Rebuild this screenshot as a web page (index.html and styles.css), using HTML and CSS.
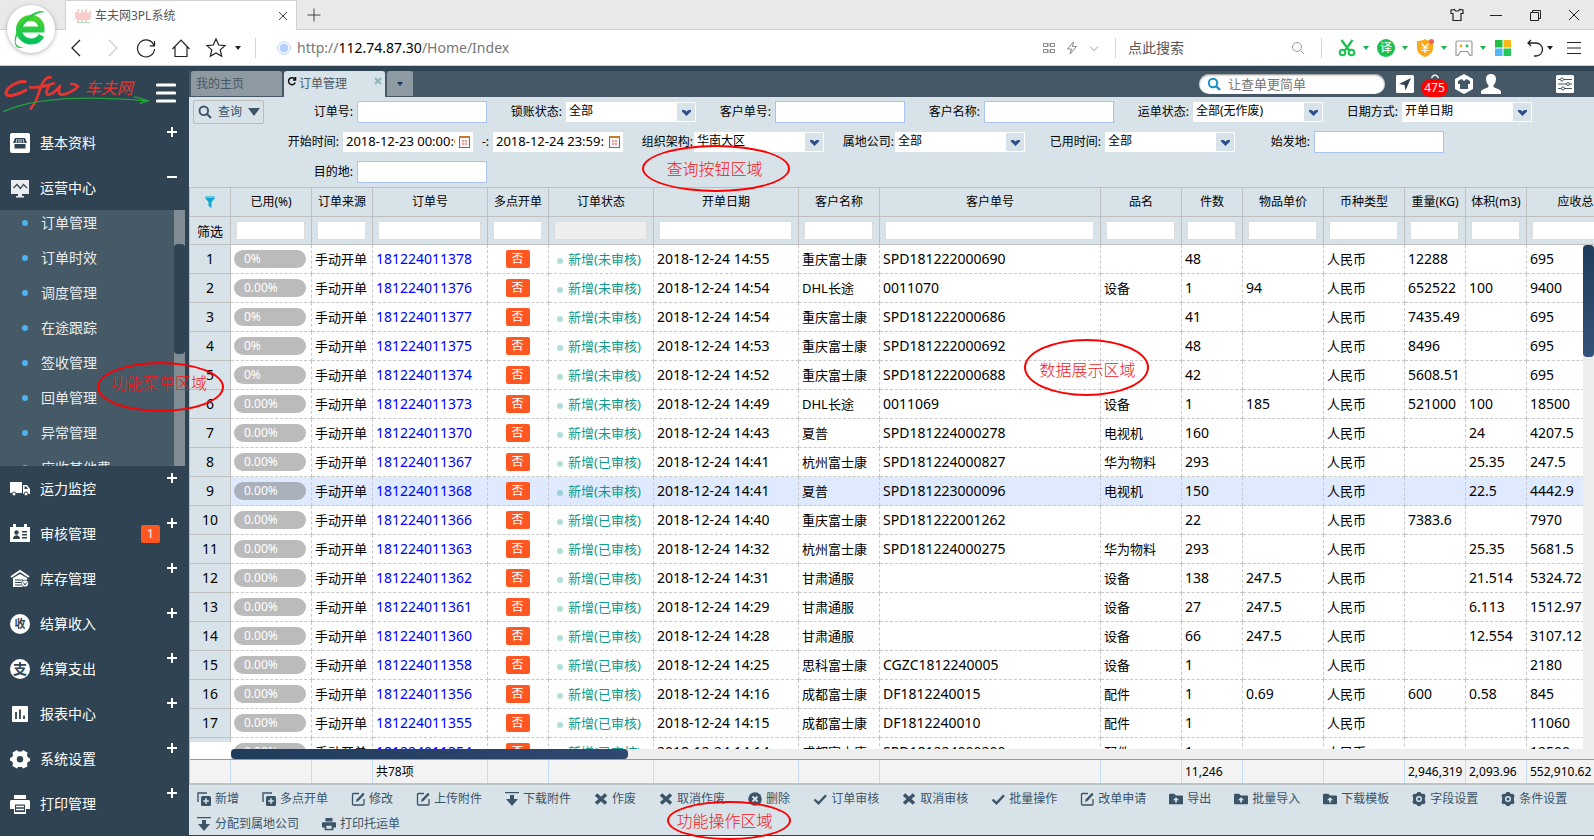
FILE: index.html
```html
<!DOCTYPE html>
<html lang="zh-CN">
<head>
<meta charset="utf-8">
<title>车夫网3PL系统</title>
<link rel="stylesheet" href="styles.css">
</head>
<body>
<svg class="defs" aria-hidden="true">
  <symbol id="i-copy" viewBox="0 0 14 14"><path d="M1 10V1h9" fill="none" stroke="currentColor" stroke-width="1.4"/><rect x="4" y="4" width="10" height="10" rx="1.5" fill="currentColor"/><path d="M9 6.2v5.6M6.2 9h5.6" stroke="#d8e3e9" stroke-width="1.6"/></symbol>
  <symbol id="i-edit" viewBox="0 0 14 14"><path d="M8 1.500H2.500a1 1 0 0 0-1 1v9.500a1 1 0 0 0 1 1H12a1 1 0 0 0 1-1V7" fill="none" stroke="currentColor" stroke-width="1.300"/><path d="M5 10l.6-2.600L12 .8l1.600 1.600L7.400 9z" fill="currentColor"/></symbol>
  <symbol id="i-down" viewBox="0 0 14 14"><path d="M0 0h14v1.300H0zM5 3h4v4h4l-6 7-6-7h4z" fill="currentColor"/></symbol>
  <symbol id="i-x" viewBox="0 0 14 14"><path d="M2 2.500l10 9M12 2.500l-10 9" stroke="currentColor" stroke-width="3.600"/></symbol>
  <symbol id="i-del" viewBox="0 0 14 14"><circle cx="7" cy="7" r="6.800" fill="currentColor"/><path d="M4.500 4.500l5 5m0-5l-5 5" stroke="#d8e3e9" stroke-width="1.800"/></symbol>
  <symbol id="i-check" viewBox="0 0 14 14"><path d="M1.500 7.500l4 3.800L13 3.200" fill="none" stroke="currentColor" stroke-width="2.400"/></symbol>
  <symbol id="i-folder" viewBox="0 0 16 14"><path d="M0 2a1 1 0 0 1 1-1h5l2 2h7a1 1 0 0 1 1 1v8a1 1 0 0 1-1 1H1a1 1 0 0 1-1-1z" fill="currentColor"/><path d="M8 5l3.500 3.500H9V11H7V8.500H4.500z" fill="#d8e3e9"/></symbol>
  <symbol id="i-gear" viewBox="0 0 16 16"><path d="M5.500 1.500L6.500 0h3l1 1.500 1.500.8 2-.3 1.500 2.700L14.700 6.500v3l.8 1.800L14 14l-2-.3-1.500.8-1 1.500h-3l-1-1.500-1.500-.8-2 .3L.5 11.300l.8-1.800v-3L.5 4.700 2 2l2 .3z" fill="currentColor"/><circle cx="8" cy="8" r="3.500" fill="#d8e3e9"/><circle cx="8" cy="8" r="1.800" fill="currentColor"/></symbol>
  <symbol id="i-print" viewBox="0 0 16 16"><path d="M4 1h8v4H4zM1 6h14a1 1 0 0 1 1 1v5h-3v3H3v-3H0V7a1 1 0 0 1 1-1z" fill="currentColor"/><path d="M5 10h6v3.500H5z" fill="#d8e3e9"/></symbol>
  <symbol id="i-arrow" viewBox="0 0 9 6"><path d="M0 0h2.500l2 1.500L6.500 0H9v1.500L4.500 6 0 1.500z" fill="#2f4f8f"/></symbol>
  <symbol id="i-caret" viewBox="0 0 6 4"><path d="M0 0h6L3 4z" fill="currentColor"/></symbol>
  <symbol id="i-cal" viewBox="0 0 11 12"><rect x=".5" y=".5" width="10" height="11" fill="#f4f6fb" stroke="#5d6f96"/><path d="M0 0h11v2H0z" fill="#c27c2c"/><path d="M3 4h5v5H3z" fill="#f0a49a"/><path d="M2 6.500h7M5.500 3v7" stroke="#fff" stroke-width=".6"/></symbol>
</svg>

<header class="browser">
  <div class="titlebar">
    <div class="browser-tab">
      <svg class="favicon" viewBox="0 0 16 16"><path d="M1 11V4M3 14V1M5 12V5M7 14V2M9 12V4M11 14V1M13 12V5M15 11V3" stroke="#f0938d" stroke-width=".9"/><path d="M2 14.500h13" stroke="#b9dfb9"/></svg>
      <span class="browser-tab-title">车夫网3PL系统</span>
      <button class="plain" aria-label="关闭标签"><svg class="s10" viewBox="0 0 10 10"><path d="M1 1l8 8M9 1L1 9" stroke="#444"/></svg></button>
    </div>
    <button class="plain new-tab" aria-label="新标签"><svg class="s14" viewBox="0 0 14 14"><path d="M7 .5v13M.5 7h13" stroke="#444"/></svg></button>
    <div class="win-controls">
      <button class="plain" aria-label="皮肤"><svg class="s14" viewBox="0 0 14 14"><path d="M4.500 1.500L1 2v3.500h2v7h8v-7h2V2l-3.500-.5L8.500 3h-3z" fill="none" stroke="#222" stroke-width="1.200"/></svg></button>
      <button class="plain" aria-label="最小化"><svg class="s14" viewBox="0 0 14 14"><path d="M1 7.500h12" stroke="#222"/></svg></button>
      <button class="plain" aria-label="还原"><svg class="s14" viewBox="0 0 14 14"><path d="M2.500 4.500h8v8h-8zM4.500 4.500v-2h8v8h-2" fill="none" stroke="#222"/></svg></button>
      <button class="plain" aria-label="关闭"><svg class="s14" viewBox="0 0 14 14"><path d="M2 2l10 10M12 2L2 12" stroke="#222"/></svg></button>
    </div>
  </div>
  <div class="navbar">
    <div class="nav-buttons">
      <button class="plain" aria-label="后退"><svg class="s20" viewBox="0 0 20 20"><path d="M14 2l-8 8 8 8" fill="none" stroke="#222" stroke-width="1.300"/></svg></button>
      <button class="plain" aria-label="前进"><svg class="s20" viewBox="0 0 20 20"><path d="M8 2l8 8-8 8" fill="none" stroke="#ccc" stroke-width="1.200"/></svg></button>
      <button class="plain" aria-label="刷新"><svg class="s20" viewBox="0 0 20 20"><path d="M18 7.500A8.500 8.500 0 1 0 18.500 11M18.500 3v4.800h-4.800" fill="none" stroke="#222" stroke-width="1.200"/></svg></button>
      <button class="plain" aria-label="主页"><svg class="s20" viewBox="0 0 20 20"><path d="M1.500 11L10 2l8.500 9M4 9v9.500h12V9" fill="none" stroke="#222" stroke-width="1.200"/></svg></button>
      <button class="plain" aria-label="收藏"><svg class="s20" viewBox="0 0 20 20"><path d="M10 1l2.700 6 6.300.6-4.800 4.300 1.500 6.400L10 15l-5.700 3.300 1.500-6.400L1 7.600 7.300 7z" fill="none" stroke="#222" stroke-width="1.200"/></svg></button>
      <svg class="caret" aria-hidden="true"><use href="#i-caret"/></svg>
    </div>
    <span class="sep"></span>
    <div class="address">
      <svg class="s14" viewBox="0 0 14 14"><circle cx="7" cy="7" r="6.400" fill="#fff" stroke="#bcd3f8"/><circle cx="7" cy="7" r="4.500" fill="#b5d0fb"/></svg>
      <a class="url" href="#">http://<b>112.74.87.30</b>/Home/Index</a>
      <svg class="s12" viewBox="0 0 12 12"><path d="M.5 1.500h4v3h-4zM7.500 1.500h4v3h-4zM.5 7.500h4v3h-4zM7.500 7.500h4v3h-4zM6 1v3.500M6 7.500V11" fill="none" stroke="#888"/></svg>
      <svg class="s14" viewBox="0 0 14 14"><path d="M8.500 1L2.500 8h4l-1.500 5 6.500-7.500h-4z" fill="none" stroke="#888"/></svg>
      <svg class="s10" viewBox="0 0 10 10"><path d="M1 3.500l4 4 4-4" fill="none" stroke="#999"/></svg>
    </div>
    <span class="sep"></span>
    <div class="web-search">
      <input type="text" value="点此搜索" aria-label="搜索">
      <svg class="s14" viewBox="0 0 14 14"><circle cx="6" cy="6" r="4.500" fill="none" stroke="#999"/><path d="M9.500 9.500L13 13" stroke="#999"/></svg>
    </div>
    <span class="sep"></span>
    <div class="extensions">
      <svg class="s18" viewBox="0 0 18 18"><path d="M3.500 1l8 11M14.500 1l-8 11" stroke="#19c24f" stroke-width="2.200"/><circle cx="4.500" cy="13.500" r="2.800" fill="none" stroke="#19c24f" stroke-width="2"/><circle cx="13.500" cy="13.500" r="2.800" fill="none" stroke="#19c24f" stroke-width="2"/></svg>
      <svg class="caret green"><use href="#i-caret"/></svg>
      <span class="ext-translate">译</span>
      <svg class="caret green"><use href="#i-caret"/></svg>
      <svg class="s18" viewBox="0 0 18 18"><path d="M9 0c2.500 1.500 5 2 8 2v7c0 5-4 7.500-8 9-4-1.500-8-4-8-9V2c3 0 5.500-.5 8-2z" fill="#fba91d"/><path d="M5.500 4.500L9 8.500l3.500-4M9 8.500V14M5.500 9h7M5.500 11.500h7" fill="none" stroke="#fff" stroke-width="1.200"/><circle cx="15.500" cy="2.500" r="2.500" fill="#f25f5f"/></svg>
      <svg class="caret green"><use href="#i-caret"/></svg>
      <svg class="s18" viewBox="0 0 18 18"><path d="M2.500 2h13a1.500 1.500 0 0 1 1.500 1.500V16l-2 .5-2.500-4h-7L3 16.500 1 16V3.500A1.500 1.500 0 0 1 2.500 2z" fill="none" stroke="#999" stroke-width="1.200"/><circle cx="6" cy="7" r="1.400" fill="#f5a623"/><circle cx="12" cy="7" r="1.400" fill="#19c24f"/></svg>
      <svg class="caret green"><use href="#i-caret"/></svg>
      <svg class="s18" viewBox="0 0 18 18"><path d="M1 1h7.500v7.500H1z" fill="#25c043"/><path d="M9.500 1H17v7.500H9.500z" fill="#fbb917"/><path d="M1 9.500h7.500V17H1z" fill="#4fb8f2"/><path d="M9.500 9.500H17V17H9.500z" fill="#1fca54"/></svg>
      <svg class="s18 undo" viewBox="0 0 18 18"><path d="M5 1L2 4l3 3M2 4h8a6.500 6.500 0 0 1 0 13H8" fill="none" stroke="#222" stroke-width="1.300"/></svg>
      <svg class="caret undo-caret"><use href="#i-caret"/></svg>
      <svg class="s14 burger-icon" viewBox="0 0 14 14"><path d="M0 1.500h14M0 7h14M0 12.500h14" stroke="#222" stroke-width="1.200"/></svg>
    </div>
  </div>
  <div class="browser-logo">
    <svg viewBox="0 0 48 48"><defs><linearGradient id="eg" x1="0" y1="0" x2="0" y2="1"><stop offset="0" stop-color="#4bd42c"/><stop offset="1" stop-color="#06c25c"/></linearGradient></defs><path d="M13 24.500h21.500c.3-7-4.500-11.500-10.500-11.500-7 0-12 5-12 11.500S17 36.500 24 36.500c5 0 8-1.500 10.500-6" fill="none" stroke="url(#eg)" stroke-width="6"/><path d="M10 40C5 36 16 17 28 10c6-3.500 10-3.500 10-1 0-4-6-4-13 0C13 16 6 31 8 39c1 4 5 5 9 3-3 .500-5 0-7-2z" fill="#25c944"/></svg>
  </div>
</header>

<div class="app">
  <aside class="sidebar">
    <div class="brand">
      <svg class="brand-logo" viewBox="0 18 450 150" role="img" aria-label="车夫网">
        <g fill="none" stroke="#e8352e" stroke-linecap="round" stroke-linejoin="round">
          <path d="M76 59C56 54 20 76 18 92c-1 16 34 8 60-8" stroke-width="9"/>
          <path d="M152 46c-16-4-28 24-34 42-6 20-14 38-26 52M90 76c22 2 50-4 72-12" stroke-width="8"/>
          <path d="M146 72c-8 16-10 28 0 26 14-2 26-16 34-26-6 16-4 28 8 26 18-3 40-18 46-24-4-6-12-8-20-8" stroke-width="8"/>
        </g>
        <path d="M10 149C90 112 230 98 444 117M402 104l43 12-26 9" fill="none" stroke="#23a33a" stroke-width="4"/>
        <text x="254" y="96" class="brand-text">车夫网</text>
      </svg>
      <button class="plain burger" aria-label="菜单"><svg viewBox="0 0 20 20"><path d="M1.500 2h17M1.500 10h17M1.500 18h17" stroke="#fff" stroke-width="3.200" stroke-linecap="round"/></svg></button>
    </div>
    <nav class="menu">
      <a href="#" class="menu-item"><svg viewBox="0 0 20 20"><rect width="20" height="20" rx="2" fill="#fff"/><path d="M5 5h10l2 5H3zM4.500 11h11v4.500h-11z" fill="#2f4353"/><path d="M7 6l-1 4M9 6v4M11 6v4M13 6l1 4" stroke="#fff" stroke-width=".8"/></svg><span>基本资料</span><i class="toggle plus"></i></a>
      <a href="#" class="menu-item"><svg viewBox="0 0 20 20"><path d="M1 2h18v14H1zM8 16h4v2H8zM6 18h8v1.500H6z" fill="#e9edf0"/><path d="M3.500 10L7 6.500l3.500 4 3-4L17 10" fill="none" stroke="#2f4353" stroke-width="1.200"/></svg><span>运营中心</span><i class="toggle"></i></a>
      <div class="submenu">
        <div class="submenu-list">
          <a href="#">订单管理</a><a href="#">订单时效</a><a href="#">调度管理</a><a href="#">在途跟踪</a><a href="#">签收管理</a><a href="#">回单管理</a><a href="#">异常管理</a><a href="#">应收其他费</a>
        </div>
        <div class="submenu-track"><div class="submenu-thumb"></div></div>
      </div>
      <a href="#" class="menu-item"><svg viewBox="0 0 20 20"><path d="M0 3h12v11H0zM13 6h4l3 4v5h-7z" fill="#fff"/><path d="M14.500 7.500h2l1.500 2.500h-3.500z" fill="#2f4353"/><circle cx="4" cy="15" r="2" fill="#fff" stroke="#2f4353"/><circle cx="16" cy="15" r="2" fill="#fff" stroke="#2f4353"/></svg><span>运力监控</span><i class="toggle plus"></i></a>
      <a href="#" class="menu-item"><svg viewBox="0 0 20 20"><path d="M0 3h3V0h3v3h8V0h3v3h3v15H0z" fill="#fff"/><circle cx="6.500" cy="8.500" r="2.200" fill="#2f4353"/><path d="M3 15c0-5 7-5 7 0zM12 7h5v1.500h-5zM12 10h5v1.500h-5zM12 13h5v1.500h-5z" fill="#2f4353"/></svg><span>审核管理</span><b class="menu-badge">1</b><i class="toggle plus"></i></a>
      <a href="#" class="menu-item"><svg viewBox="0 0 20 20"><path d="M1 8l9-6 9 6" fill="none" stroke="#fff" stroke-width="2"/><path d="M3 9l7-4 7 4v9H3z" fill="#fff"/><path d="M5 11h8M5 13.500h6M5 16h6" stroke="#2f4353"/><circle cx="15" cy="14.500" r="3.500" fill="#fff" stroke="#2f4353" stroke-width=".8"/><path d="M13.500 13.500l1.500 2.500 1.500-2.500" fill="none" stroke="#2f4353"/></svg><span>库存管理</span><i class="toggle plus"></i></a>
      <a href="#" class="menu-item"><em class="menu-disc small">收</em><span>结算收入</span><i class="toggle plus"></i></a>
      <a href="#" class="menu-item"><em class="menu-disc">支</em><span>结算支出</span><i class="toggle plus"></i></a>
      <a href="#" class="menu-item"><svg viewBox="0 0 20 20"><rect x="2" y="2" width="16" height="16" rx="1" fill="#fff"/><path d="M6 8v7M10 5.500V15M14 11.500V15" stroke="#2f4353" stroke-width="1.800"/></svg><span>报表中心</span><i class="toggle plus"></i></a>
      <a href="#" class="menu-item"><svg viewBox="0 0 20 20"><path d="M7 1L8 2.500h4L13 1l4.500 2.500L17 6.500 18 8.500l2 1v2.500l-2 1-1 1.500.5 3L13 19.500 12 18H8l-1 1.500-4.500-2.500.5-3L2 12.500l-2-1V9l2-1 1-1.500-.5-3z" fill="#fff"/><circle cx="10" cy="10.200" r="3.200" fill="#2f4353"/></svg><span>系统设置</span><i class="toggle plus"></i></a>
      <a href="#" class="menu-item"><svg viewBox="0 0 20 20"><path d="M4 1h12v4H4zM1 6h18l1 1v8h-4v5H4v-5H0V7z" fill="#fff"/><path d="M5 10.500h10V18H5z" fill="#2f4353"/><path d="M6 12.500h8M6 15.500h8" stroke="#fff" stroke-width="1.500"/></svg><span>打印管理</span><i class="toggle plus"></i></a>
    </nav>
  </aside>

  <main class="main">
    <div class="tabs">
      <button class="tab">我的主页</button>
      <button class="tab active"><svg class="tab-refresh" viewBox="0 0 10 10"><path d="M8 3.200A3.500 3.500 0 1 0 8.300 6.500M8.500 1v3H6" fill="none" stroke="#111" stroke-width="1.500"/></svg><span>订单管理</span><svg class="tab-close" viewBox="0 0 8 8"><path d="M1 1l6 6M7 1L1 7" stroke="#8fb5bd" stroke-width="2"/></svg></button>
      <button class="tab more" aria-label="更多标签"><svg class="caret"><use href="#i-caret"/></svg></button>
      <div class="top-tools">
        <label class="quick-search"><svg class="s14" viewBox="0 0 14 14"><circle cx="6" cy="6" r="4.200" fill="none" stroke="#1593c9" stroke-width="2"/><path d="M9 9l4 4" stroke="#1593c9" stroke-width="2.400"/></svg><input type="text" placeholder="让查单更简单" aria-label="查单"></label>
        <button class="plain" aria-label="发送"><svg class="s20" viewBox="0 0 20 20"><rect x="1" y="1" width="18" height="18" rx="1.500" fill="#fff"/><path d="M16 4L10.500 16.500 9.500 11 4 10z" fill="#2f4353"/></svg></button>
        <button class="plain bell" aria-label="消息"><svg viewBox="0 0 10 6"><path d="M1 5c1-5 7-5 8 0" fill="none" stroke="#fff" stroke-width="1.500"/></svg><b>475</b></button>
        <button class="plain" aria-label="换肤"><svg class="s20" viewBox="0 0 20 20"><path d="M10 0l9 5v10l-9 5-9-5V5z" fill="#fff"/><path d="M7.500 5L4 7v3h2v5h8v-5h2V7l-3.500-2L10 7z" fill="#455866"/></svg></button>
        <button class="plain user" aria-label="用户"><svg class="s20" viewBox="0 0 20 20"><path d="M10 0c3.500 0 5 2.500 5 5s-1 5-2.500 6v2c2 1.500 7.500 2 7.500 5v2H0v-2c0-3 5.500-3.500 7.500-5v-2C6 10 5 7.500 5 5s1.500-5 5-5z" fill="#fff"/></svg></button>
        <button class="plain" aria-label="设置"><svg class="s20" viewBox="0 0 20 20"><rect x="1" y="1" width="18" height="18" rx="1.500" fill="#fff"/><path d="M3 5.500h14M3 10h14M3 14.500h14" stroke="#455866"/><g fill="#fff" stroke="#455866"><circle cx="7" cy="5.500" r="1.500"/><circle cx="13" cy="10" r="1.500"/><circle cx="8" cy="14.500" r="1.500"/></g></svg></button>
      </div>
    </div>

    <form class="query">
      <button type="button" class="query-btn"><svg class="s14" viewBox="0 0 14 14"><circle cx="5.800" cy="5.800" r="4.300" fill="none" stroke="#3c5468" stroke-width="1.900"/><path d="M9 9l4 4" stroke="#3c5468" stroke-width="2.200"/></svg><span>查询</span><svg class="query-caret" viewBox="0 0 12 8"><path d="M0 0h12L6 8z" fill="#3c5468"/></svg></button>
      <div class="query-rows">
        <div class="query-row">
          <label class="field">订单号:<input type="text"></label>
          <label class="field">锁账状态:<span class="pick"><select><option>全部</option></select><svg><use href="#i-arrow"/></svg></span></label>
          <label class="field">客户单号:<input type="text"></label>
          <label class="field">客户名称:<input type="text"></label>
          <label class="field">运单状态:<span class="pick"><select><option>全部(无作废)</option></select><svg><use href="#i-arrow"/></svg></span></label>
          <label class="field">日期方式:<span class="pick"><select><option>开单日期</option></select><svg><use href="#i-arrow"/></svg></span></label>
        </div>
        <div class="query-row">
          <label class="field f-start">开始时间:<span class="date"><input type="text" value="2018-12-23 00:00:00"><svg><use href="#i-cal"/></svg></span></label>
          <label class="field f-end">-:<span class="date"><input type="text" value="2018-12-24 23:59:59"><svg><use href="#i-cal"/></svg></span></label>
          <label class="field f-org">组织架构:<span class="pick"><select><option>华南大区</option></select><svg><use href="#i-arrow"/></svg></span></label>
          <label class="field f-org">属地公司:<span class="pick"><select><option>全部</option></select><svg><use href="#i-arrow"/></svg></span></label>
          <label class="field f-used">已用时间:<span class="pick"><select><option>全部</option></select><svg><use href="#i-arrow"/></svg></span></label>
          <label class="field">始发地:<input type="text"></label>
        </div>
        <div class="query-row">
          <label class="field">目的地:<input type="text"></label>
        </div>
      </div>
    </form>

    <section class="grid">
      <div class="grid-clip"><table class="grid-head" id="gridHead"></table></div>
      <div class="grid-body">
        <div class="frozen"><table class="frozen-table" id="gridNumbers"></table></div>
        <div class="data-pane">
          <div class="data-row">
            <div class="data-view"><table class="data-table" id="gridRows"></table></div>
            <div class="vtrack"><div class="vthumb"></div></div>
          </div>
          <div class="htrack"><div class="hthumb"></div></div>
        </div>
      </div>
      <div class="grid-clip"><table class="grid-foot" id="gridFoot"></table></div>
    </section>

    <div class="actions" id="actions"></div>
  </main>
</div>

<div class="note note-menu">功能菜单区域</div>
<div class="note note-query">查询按钮区域</div>
<div class="note note-data">数据展示区域</div>
<div class="note note-action">功能操作区域</div>
<script src="app.js"></script>
</body>
</html>
```

FILE: styles.css
```css
* { box-sizing: border-box; }

html, body { height: 100%; }

body {
  margin: 0;
  padding-bottom: 4px;
  display: flex;
  flex-direction: column;
  overflow: hidden;
  background: #fff;
  color: #000;
  font: 12px/16px "Noto Sans", "Noto Sans CJK SC", sans-serif;
}

button, input, select { font: inherit; color: inherit; }
a { color: inherit; text-decoration: none; }
svg { display: block; flex: none; }

.defs { position: absolute; width: 0; height: 0; }
.plain { display: flex; align-items: center; justify-content: center; padding: 0; border: 0; background: none; }
.s10 { width: 10px; height: 10px; }
.s12 { width: 12px; height: 12px; }
.s14 { width: 14px; height: 14px; }
.s18 { width: 18px; height: 18px; }
.s20 { width: 20px; height: 20px; }
.caret { width: 6px; height: 4px; color: #222; }
.caret.green { color: #19b24f; }

/* browser frame */
.browser { position: relative; flex: none; border-bottom: 1px solid #c9d0d4; }
.titlebar { display: flex; align-items: center; height: 30px; padding-left: 65px; background: #e9e9e9; border-bottom: 1px solid #d2d2d2; }
.browser-tab { display: flex; align-items: center; gap: 4px; width: 232px; height: 30px; margin-bottom: -1px; padding: 0 8px 0 9px; background: #fff; border: 1px solid #d2d2d2; border-bottom: 0; }
.favicon { width: 16px; height: 16px; }
.browser-tab-title { flex: 1; color: #555; }
.new-tab { margin-left: 10px; }
.win-controls { display: flex; gap: 25px; margin-left: auto; padding-right: 13px; }
.navbar { display: flex; align-items: center; height: 35px; padding-left: 65px; background: #fff; }
.nav-buttons { display: flex; align-items: center; gap: 15px; width: 190px; padding-left: 1px; }
.nav-buttons .caret { margin-left: -6px; }
.sep { flex: none; width: 1px; height: 20px; background: #d5d5d5; }
.address { display: flex; flex: 1; align-items: center; gap: 10px; padding: 0 16px 0 21px; }
.url { flex: 1; margin-left: -4px; color: #777; font-size: 14px; line-height: 20px; }
.url b { color: #000; font-weight: 400; }
.web-search { display: flex; align-items: center; width: 205px; padding: 0 16px 0 12px; }
.web-search input { flex: 1; min-width: 0; padding: 0; border: 0; color: #555; font-size: 14px; outline: 0; }
.extensions { display: flex; flex: none; align-items: center; gap: 8px; width: 272px; padding-left: 16px; }
.ext-translate { width: 18px; height: 18px; border-radius: 9px; background: #19c24f; color: #fff; line-height: 18px; text-align: center; }
.extensions .caret { margin-left: -1px; }
.extensions .undo { margin-left: 6px; }
.extensions .undo-caret { margin-left: -5px; }
.burger-icon { margin-left: 6px; }
.browser-logo { position: absolute; left: 7px; top: 5px; width: 48px; height: 48px; border-radius: 24px; background: #fff; box-shadow: 0 1px 4px rgba(0, 0, 0, .3); }

/* app shell */
.app { display: flex; flex: 1; min-height: 0; background: #2f4353; border-bottom: 1px solid #2f4353; }
.sidebar { flex: none; width: 189px; padding-right: 4px; overflow: hidden; color: #fff; }
.brand { display: flex; align-items: center; height: 54px; }
.brand-logo { width: 150px; height: 50px; }
.brand-text { fill: #e8352e; font-size: 48px; font-style: italic; }
.burger { margin-left: 6px; }
.burger svg { width: 20px; height: 20px; }
.menu-item { display: flex; gap: 10px; align-items: center; height: 45px; padding: 0 8px 0 10px; font-size: 14px; line-height: 20px; }
.menu-item > svg { width: 20px; height: 20px; }
.menu-item > span { flex: 1; }
.menu-disc { width: 20px; height: 20px; border-radius: 10px; background: #fff; color: #2f4353; font-size: 14px; font-style: normal; font-weight: 700; text-align: center; }
.menu-disc.small { font-size: 11px; }
.menu-badge { width: 19px; height: 18px; margin-right: -3px; border-radius: 2px; background: #ff5722; font-size: 12px; font-weight: 400; line-height: 18px; text-align: center; }
.toggle { width: 10px; height: 10px; margin-bottom: 22px; background: linear-gradient(#fff, #fff) center / 10px 2px no-repeat; }
.toggle.plus { background: linear-gradient(#fff, #fff) center / 10px 2px no-repeat, linear-gradient(#fff, #fff) center / 2px 10px no-repeat; }
.submenu { display: flex; height: 256px; overflow: hidden; background: #465966; }
.submenu-list { flex: 1; margin-top: -5px; }
.submenu-list a { display: flex; gap: 13px; align-items: center; height: 35px; padding-left: 22px; color: #e8ecee; font-size: 14px; line-height: 20px; }
.submenu-list a::before { content: ""; width: 6px; height: 6px; border-radius: 3px; background: #4db3ee; }
.submenu-track { width: 11px; padding-top: 34px; background: #7f8c94; }
.submenu-thumb { height: 110px; border-radius: 4px; background: #2f4353; }

.main { display: flex; flex: 1; flex-direction: column; min-width: 0; margin-top: 5px; background: #d8e3e9; }
.tabs { display: flex; flex: none; gap: 2px; height: 26px; padding-left: 2px; background: #465866; }
.tab { display: flex; align-items: center; width: 91px; height: 25px; padding: 0 5px; border: 0; border-radius: 3px 3px 0 0; background: #8e9aa1; color: #465866; }
.tab.active { gap: 2px; width: 101px; height: 26px; padding: 0 3px; background: #d8e3e9; }
.tab.active span { flex: 1; text-align: left; }
.tab-refresh { width: 10px; height: 10px; margin-bottom: 7px; }
.tab-close { width: 8px; height: 8px; margin-bottom: 6px; }
.tab.more { justify-content: center; width: 26px; }
.tab.more .caret { color: #17305e; }
.top-tools { display: flex; align-items: center; margin-left: auto; padding-right: 19px; }
.quick-search { display: flex; align-items: center; gap: 7px; width: 186px; height: 20px; margin-right: 10px; padding: 0 8px; border-radius: 10px; background: #fff; box-shadow: inset 0 1px 2px #888; }
.quick-search input { flex: 1; min-width: 0; padding: 0; border: 0; background: none; font-size: 13px; outline: 0; }
.quick-search input::placeholder { color: #777; }
.bell { flex-direction: column; margin: 0 6px; }
.bell svg { width: 10px; height: 5px; }
.bell b { width: 27px; height: 18px; margin-bottom: -3px; border-radius: 9px; background: #f00; color: #fff; font-size: 12px; font-weight: 400; line-height: 18px; }
.user { margin: 0 54px 0 7px; }

/* query form */
.query { display: flex; flex: none; height: 90px; padding: 0 0 0 4px; }
.query-btn { display: flex; flex: none; gap: 6px; align-items: center; width: 71px; height: 24px; margin-top: 3px; padding: 0 4px; border: 1px solid #bcbcbc; border-radius: 2px; background: none; color: #3c5468; white-space: nowrap; }
.query-caret { width: 12px; height: 8px; }
.query-rows { flex: none; margin-left: 14px; }
.query-row { display: flex; align-items: center; height: 30px; }
.field { display: flex; flex: none; gap: 4px; align-items: center; justify-content: flex-end; width: 209px; white-space: nowrap; }
.field > input { width: 130px; height: 22px; border: 1px solid #a9c5ef; background: #fff; }
.f-start { width: 195px; }
.f-end { width: 150px; }
.f-org { gap: 1px; width: 201px; }
.f-used { width: 210px; }
.pick { position: relative; width: 130px; height: 20px; }
.pick select { width: 130px; height: 20px; padding: 0 20px 2px 3px; border: 0; border-radius: 0; appearance: none; background: linear-gradient(#d8e3e9, #d8e3e9) 111px 1px / 18px 18px no-repeat #fff; }
.pick svg { position: absolute; right: 5px; top: 8px; width: 9px; height: 6px; pointer-events: none; }
.date { display: flex; width: 130px; height: 20px; padding: 0 3px; gap: 4px; align-items: center; background: #fff; }
.date input { flex: 1; min-width: 0; height: 18px; padding: 0 0 2px; border: 0; font-size: 13px; outline: 0; }
.date svg { width: 11px; height: 12px; }

/* data grid */
.grid { display: flex; flex: 1; flex-direction: column; min-height: 0; border-top: 1px solid #c0c0c0; border-left: 1px solid #c0c0c0; }
.grid-clip { flex: none; overflow: hidden; }
.grid table { border-spacing: 0; table-layout: fixed; width: 1459px; }
.grid th, .grid td { padding: 0; overflow: hidden; font-weight: 400; white-space: nowrap; }
.grid-head th, .grid-head td { height: 29px; border-right: 1px solid #c0c0c0; border-bottom: 1px solid #c0c0c0; text-align: center; }
.grid-head td { height: 28px; font-size: 13px; }
.grid-head input { display: block; width: calc(100% - 11px); height: 19px; margin: 0 6px 1px 5px; border: 1px solid #ddd; background: #fff; }
.grid-head input:disabled { background: #eee; }
.grid-head svg { width: 10px; height: 12px; margin: 0 auto; }
.grid-body { display: flex; flex: 1; min-height: 0; background: #fff; }
.frozen { flex: none; width: 41px; margin-bottom: 17px; overflow: hidden; background: #d8e3e9; }
.grid .frozen-table { width: 41px; }
.frozen-table th { height: 29px; border-right: 1px solid #c0c0c0; border-bottom: 1px solid #c0c0c0; font-size: 14px; }
.data-pane { display: flex; flex: 1; flex-direction: column; min-width: 0; }
.data-row { display: flex; flex: 1; min-height: 0; }
.data-view { flex: 1; min-width: 0; overflow: hidden; }
.grid .data-table { width: 1418px; }
.data-table td { height: 29px; padding-left: 3px; border-right: 1px dashed #c8c8c8; border-bottom: 1px dashed #c8c8c8; font-size: 13px; line-height: 18px; }
.data-table td.num { font-size: 14px; }
.data-table td.center { padding: 0 1px 0 0; }
.data-table a { color: #00f; }
.data-table tr.selected { background: #dfeaff; }
.pct { display: block; width: 72px; height: 18px; padding-left: 10px; border-radius: 9px; background: rgba(120, 120, 120, .5); color: #fff; font-size: 12px; }
.flag { display: block; width: 24px; height: 18px; margin: 0 auto; border-radius: 2px; background: #ff5722; color: #fff; font-size: 12px; text-align: center; }
.status { display: flex; gap: 5px; align-items: center; padding-left: 5px; color: #0f9a8a; }
.status::before { content: ""; width: 6px; height: 6px; margin-top: 4px; border-radius: 3px; background: rgba(15, 154, 138, .32); }
.vtrack { flex: none; width: 11px; background: #eee; }
.vthumb { height: 112px; border-radius: 4px; background: linear-gradient(#203c5c, #35527a); }
.htrack { flex: none; height: 10px; background: #eee; }
.hthumb { width: 397px; height: 10px; border-radius: 4px; background: linear-gradient(90deg, #203c5c, #2f4870); }
.grid-foot { border-top: 1px solid #7f9dc6; border-bottom: 1px solid #a9c5ea; background: #f3f3f3; }
.grid-foot td { height: 23px; border-right: 1px solid #c5dcf7; }
.grid .grid-foot td { padding-left: 3px; }

/* bottom actions */
.actions { display: flex; flex: none; flex-wrap: wrap; gap: 3px 23px; padding: 3px 0 0 8px; border-top: 1px solid #bcc4c8; }
.actions button { gap: 4px; height: 22px; color: #3c5468; }
.actions svg { width: 14px; height: 14px; }

/* red call-outs lying over the page */
.note { position: absolute; display: flex; align-items: center; justify-content: center; border: 2px solid #f00; border-radius: 50%; color: #f01818; font-size: 16px; font-weight: 300; line-height: 20px; white-space: nowrap; }
.note-menu { left: 97px; top: 362px; width: 127px; height: 50px; padding: 0 3px 8px 0; }
.note-query { left: 642px; top: 145px; width: 148px; height: 47px; padding-right: 3px; }
.note-data { left: 1024px; top: 339px; width: 125px; height: 57px; padding: 4px 0 0 2px; }
.note-action { left: 667px; top: 801px; width: 124px; height: 39px; padding-right: 9px; }
```

FILE: app.js
```javascript
const columns = [
  ["已用(%)", 81], ["订单来源", 61], ["订单号", 115], ["多点开单", 61], ["订单状态", 105],
  ["开单日期", 145], ["客户名称", 81], ["客户单号", 221], ["品名", 81], ["件数", 61],
  ["物品单价", 81], ["币种类型", 81], ["重量(KG)", 61], ["体积(m3)", 61], ["应收总收入", 122]
];

const orders = [
  ["0%", "378", "未", "14:55", "重庆富士康", "SPD181222000690", "", "48", "", "12288", "", "695"],
  ["0.00%", "376", "未", "14:54", "DHL长途", "0011070", "设备", "1", "94", "652522", "100", "9400"],
  ["0%", "377", "未", "14:54", "重庆富士康", "SPD181222000686", "", "41", "", "7435.49", "", "695"],
  ["0%", "375", "未", "14:53", "重庆富士康", "SPD181222000692", "", "48", "", "8496", "", "695"],
  ["0%", "374", "未", "14:52", "重庆富士康", "SPD181222000688", "", "42", "", "5608.51", "", "695"],
  ["0.00%", "373", "未", "14:49", "DHL长途", "0011069", "设备", "1", "185", "521000", "100", "18500"],
  ["0.00%", "370", "未", "14:43", "夏普", "SPD181224000278", "电视机", "160", "", "", "24", "4207.5"],
  ["0.00%", "367", "已", "14:41", "杭州富士康", "SPD181224000827", "华为物料", "293", "", "", "25.35", "247.5"],
  ["0.00%", "368", "未", "14:41", "夏普", "SPD181223000096", "电视机", "150", "", "", "22.5", "4442.9"],
  ["0.00%", "366", "已", "14:40", "重庆富士康", "SPD181222001262", "", "22", "", "7383.6", "", "7970"],
  ["0.00%", "363", "已", "14:32", "杭州富士康", "SPD181224000275", "华为物料", "293", "", "", "25.35", "5681.5"],
  ["0.00%", "362", "已", "14:31", "甘肃通服", "", "设备", "138", "247.5", "", "21.514", "5324.72"],
  ["0.00%", "361", "已", "14:29", "甘肃通服", "", "设备", "27", "247.5", "", "6.113", "1512.97"],
  ["0.00%", "360", "已", "14:28", "甘肃通服", "", "设备", "66", "247.5", "", "12.554", "3107.12"],
  ["0.00%", "358", "已", "14:25", "思科富士康", "CGZC1812240005", "设备", "1", "", "", "", "2180"],
  ["0.00%", "356", "已", "14:16", "成都富士康", "DF1812240015", "配件", "1", "0.69", "600", "0.58", "845"],
  ["0.00%", "355", "已", "14:15", "成都富士康", "DF1812240010", "配件", "1", "", "", "", "11060"],
  ["0.00%", "354", "已", "14:14", "成都富士康", "SPD181224000200", "配件", "1", "", "", "", "12500"]
];

const actions = [
  ["copy", "新增"], ["copy", "多点开单"], ["edit", "修改"], ["edit", "上传附件"], ["down", "下载附件"],
  ["x", "作废"], ["x", "取消作废"], ["del", "删除"], ["check", "订单审核"], ["x", "取消审核"],
  ["check", "批量操作"], ["edit", "改单申请"], ["folder", "导出"], ["folder", "批量导入"],
  ["folder", "下载模板"], ["gear", "字段设置"], ["gear", "条件设置"], ["down", "分配到属地公司"], ["print", "打印托运单"]
];

const dataCols = columns.map(([, w]) => `<col style="width:${w}px">`).join("");
const allCols = `<colgroup><col style="width:41px">${dataCols}</colgroup>`;
const put = (id, html) => { document.getElementById(id).innerHTML = html; };

const funnel = '<svg viewBox="0 0 10 12"><path d="M0 0h10v2H0z" fill="#6cc7e2"/><path d="M0 2h10L6.500 6v6L3.500 10V6z" fill="#12a5d2"/></svg>';
put("gridHead", allCols
  + `<tr><th>${funnel}</th>${columns.map(([name]) => `<th>${name}</th>`).join("")}</tr>`
  + `<tr><td>筛选</td>${columns.map(([name]) => `<td><input type="text" aria-label="${name}"${name === "订单状态" ? " disabled" : ""}></td>`).join("")}</tr>`);

put("gridNumbers", orders.map((_, i) => `<tr><th>${i + 1}</th></tr>`).join(""));

const num = (v) => `<td class="num">${v}</td>`;
put("gridRows", `<colgroup>${dataCols}</colgroup>` + orders.map((o, i) => `<tr${i === 8 ? ' class="selected"' : ""}>`
  + `<td><span class="pct">${o[0]}</span></td><td>手动开单</td>`
  + `<td class="num"><a href="#">181224011${o[1]}</a></td><td class="center"><span class="flag">否</span></td>`
  + `<td><span class="status">新增(${o[2]}审核)</span></td>${num("2018-12-24 " + o[3])}<td>${o[4]}</td>`
  + `${num(o[5])}<td>${o[6]}</td>${num(o[7])}${num(o[8])}<td>人民币</td>${num(o[9])}${num(o[10])}${num(o[11])}</tr>`).join(""));

const totals = { 2: "共78项", 9: "11,246", 12: "2,946,319", 13: "2,093.96", 14: "552,910.62" };
put("gridFoot", allCols + `<tr><td></td>${columns.map((_, i) => `<td>${totals[i] || ""}</td>`).join("")}</tr>`);

put("actions", actions.map(([icon, text]) => `<button class="plain"><svg><use href="#i-${icon}"/></svg><span>${text}</span></button>`).join(""));
```
